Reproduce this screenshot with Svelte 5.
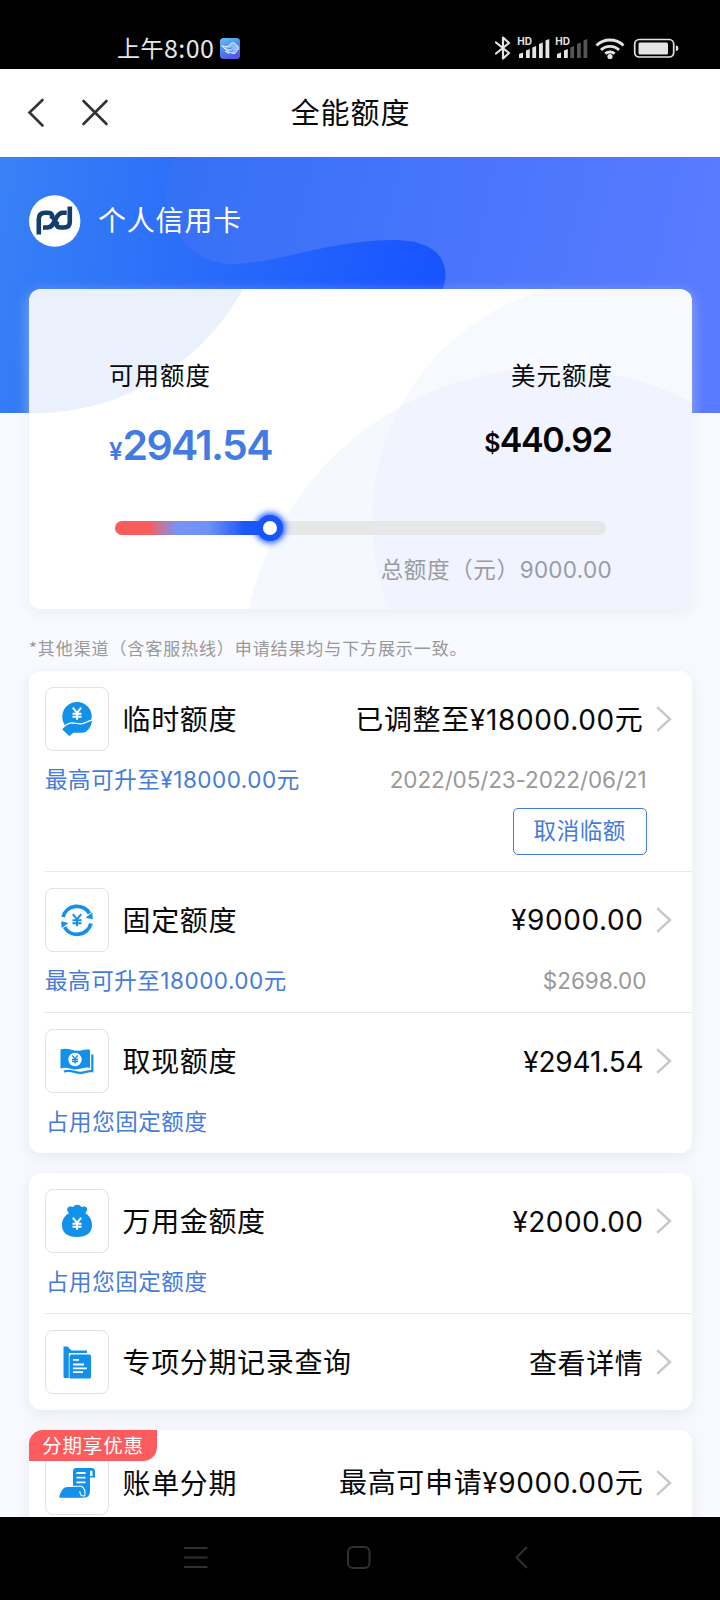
<script>
  const groups = [
    [
      { icon: 'hand', label: '临时额度', value: '已调整至¥18000.00元', fit: 0.65, note: '最高可升至¥18000.00元', side: '2022/05/23-2022/06/21', sideFit: -0.12, action: '取消临额' },
      { icon: 'cycle', label: '固定额度', value: '¥9000.00', fit: 0.6, note: '最高可升至18000.00元', side: '$2698.00', sideFit: 0 },
      { icon: 'cash', label: '取现额度', value: '¥2941.54', fit: -0.15, note: '占用您固定额度', inset: true }
    ],
    [
      { icon: 'bag', label: '万用金额度', value: '¥2000.00', fit: 0.45, note: '占用您固定额度', inset: true },
      { icon: 'files', label: '专项分期记录查询', value: '查看详情', fit: 0 }
    ],
    [{ icon: 'bill', label: '账单分期', value: '最高可申请¥9000.00元', fit: 0.6, tag: '分期享优惠' }]
  ];
  const used = 31.5;
  const parts = (s) => s.match(/[\x20-\xff]+|[^\x20-\xff]+/g) ?? [];
  const isNum = (s) => s.charCodeAt(0) < 256;
</script>

{#snippet mixed(text, fit)}{#each parts(text) as p}{#if isNum(p)}<span class="num" style="letter-spacing:{fit}px">{p}</span>{:else}<span>{p}</span>{/if}{/each}{/snippet}

{#snippet yen(x, y, s, color)}
  <path transform="translate({x} {y}) scale({s})" d="M-4 -5.5 0 -.5 4-5.5M0-.5V6M-4.3 .2H4.3M-4.3 3H4.3" fill="none" stroke={color} stroke-width="1.9" />
{/snippet}

{#snippet icon(name)}
  <svg class="glyph" width="64" height="64" viewBox="0 0 64 64" fill="#1290ea">
    {#if name === 'hand'}
      <circle cx="32" cy="29.7" r="14.7" />
      <path d="M16.3 42.5C20 38 24 35.5 28 36c4 .4 6 1.500 10 .5 4-1 6-3.500 10-3.500-1 7-5 13-10 13.500H28.500l-4.200 3.500z" stroke="#fff" stroke-width="1.300" />
      {@render yen(32, 26.5, 1.05, '#fff')}
    {:else if name === 'cycle'}
      <path d="M18 29A14.500 14.500 0 0 1 44.500 25.500M46 35.600A14.500 14.500 0 0 1 19.500 39.100" fill="none" stroke="#1290ea" stroke-width="3.800" />
      <path d="M47.300 24.500 47.800 31.300 40.500 29.700zM16.700 40.100 16.200 33.300 23.500 34.900z" />
      {@render yen(32, 32, 1.05, '#1290ea')}
    {:else if name === 'cash'}
      <path d="M15.500 20.500c8-2.500 13 2.500 20.500 1 4-.9 6.500-1.300 9-.7V39c-6-1.500-10 2-15.500 1.500-5-.5-8-3-14-1z" />
      <path d="M19 42.500c8-2.500 12 2.500 18.500 1.200 4-.8 6-2.200 9.800-1.500V25.500" fill="none" stroke="#1290ea" stroke-width="2.200" />
      <circle cx="30" cy="30.500" r="6.700" fill="#fff" />
      {@render yen(30, 30.300, .72, '#1290ea')}
    {:else if name === 'bag'}
      <path d="M24 24c-2.500-1.800-2.800-6.500 1.500-6.500 1.500 0 2 .3 2.800.5 1.500-3 6.500-3 8 0 .8-.3 1.500-.5 2.700-.5 4 0 4 4.500 1.200 6.500C45 27 47 31.500 47 36c0 8-5.500 12-15 12s-15-4-15-12c0-4.500 2-9 7-12z" />
      {@render yen(32, 34.500, 1.05, '#fff')}
    {:else if name === 'files'}
      <path d="M18.500 16.500h4l4 4h15.500v2.500H23.800V48H20a1.500 1.500 0 0 1-1.500-1.500z" />
      <path d="M26 24.500h18.500a1.500 1.500 0 0 1 1.500 1.500v21a1.500 1.500 0 0 1-1.500 1.500H24.500V26z" />
      <path d="M28 29.800h6M28 34.500h11M28 38.300h14M28 42.200h10" stroke="#fff" stroke-width="1.800" />
    {:else}
      <path d="M28 36V20.500c0-2 1-3.500 3-3.500h15.500c2.500 0 3.500 1.500 3.500 4v5.500h-5V39.500c0 5-2 7.200-6.500 7.200H15.300c-1 0-1.300-1-.8-2 2-5.500 4-8.700 8-8.700z" />
      <path d="M24 35.300h12.500c3.500 2 4 5.500 3.300 9.500-3.300 1-4.800-1.500-5-4.500" fill="none" stroke="#fff" stroke-width="1.100" />
      <path d="M31.500 22h9M31.500 26.700h9M31.500 31.300h9" stroke="#fff" stroke-width="1.800" />
      <path d="M45 25v-4c0-2 2.500-2 2.500 0v4z" fill="#fff" />
    {/if}
  </svg>
{/snippet}

<div class="screen">
  <header class="status">
    <div class="clock">
      <span>上午</span><span class="time">8:00</span>
      <svg width="20" height="21" viewBox="0 0 20 21">
        <defs><linearGradient id="launcher" x1="0" y1="0" x2=".4" y2="1"><stop stop-color="#67c4f4" /><stop offset=".5" stop-color="#4a90ee" /><stop offset="1" stop-color="#5659e8" /></linearGradient></defs>
        <rect width="20" height="21" rx="3.500" fill="url(#launcher)" />
        <path d="M2 7.500c4 2 6 1 8.500-1.500 2-2 5-1.500 5.500 1 3 .5 3.500 4.500.8 5.500-.5 3-4 4-6 2-2 1-4.500.3-5.500-1.500 1.500.4 3 0 4-.8C6.500 12.500 3.500 10.500 2 7.500z" fill="#8fbff8" stroke="#eaf5ff" stroke-width="1" />
        <path d="M7 10c2 1.200 4 .5 5.500-1M10 13.500c1 .5 2.500 0 3-1.500" fill="none" stroke="#4a7ee8" stroke-width="1" />
      </svg>
    </div>
    <svg class="signals" width="186" height="26" viewBox="0 0 186 26" fill="#e4e4e4">
      <path d="M2 7.500 15 18 9 23.500V2.500L15 8 2 18.500" fill="none" stroke="#e4e4e4" stroke-width="2.200" stroke-linejoin="round" stroke-linecap="round" />
      <g class="hd"><text x="23.300" y="10.300">HD</text><text x="61.300" y="10.300">HD</text></g>
      <path d="M25 23v-4l4-1.500V23zM32 23v-7.500l3.800-1.500v9zM38.300 23V12.500l3.800-1.500v12zM45 23V9l3.800-1.500V23zM51.500 23V5.500L55.300 4v19z" />
      <path d="M63 23v-4l4-1.500V23zM70 23v-7.500l3.800-1.500v9z" />
      <path d="M76.300 23V12.500l3.800-1.500v12zM83 23V9l3.800-1.500V23zM89.500 23V5.500L93.300 4v19z" fill="#555" />
      <g fill="none" stroke="#e4e4e4" stroke-width="2.900"><path d="M102.500 10.500a19.500 19.500 0 0 1 27 0M107 15a13 13 0 0 1 18 0M111.300 18.800a7 7 0 0 1 9.400 0" /></g>
      <circle cx="116" cy="21.500" r="2.600" />
      <rect x="140.700" y="4.500" width="39" height="17.500" rx="4.500" fill="none" stroke="#e4e4e4" stroke-width="1.700" />
      <rect x="144.500" y="7.500" width="29.500" height="12" rx="1.500" />
      <path d="M181.800 10.500c2 0 2.500 1 2.500 2.700s-.5 2.800-2.500 2.800z" />
    </svg>
  </header>

  <nav class="bar">
    <svg width="90" height="32" viewBox="0 0 90 32" fill="none" stroke="#333" stroke-width="2.600" stroke-linecap="round">
      <path d="M16.500 3 3.500 15.500 16.500 28.500M57.500 4 80.500 27M80.500 4 57.500 27" />
    </svg>
    <h1>全能额度</h1>
  </nav>

  <main>
    <section class="hero">
      <svg class="wave" width="720" height="256" viewBox="0 0 720 256">
        <defs>
          <linearGradient id="base" x1="0" y1="0" x2="450" y2="90" gradientUnits="userSpaceOnUse"><stop stop-color="#3882f5" /><stop offset="1" stop-color="#1853ff" /></linearGradient>
          <linearGradient id="blob" x1="160" y1="0" x2="720" y2="120" gradientUnits="userSpaceOnUse"><stop stop-color="#3470f5" /><stop offset=".35" stop-color="#4173fa" /><stop offset="1" stop-color="#5a7bff" /></linearGradient>
        </defs>
        <rect width="720" height="256" fill="url(#base)" />
        <path d="M177 0C164 12 163 34 169 54C177 90 205 107 231 107C276 107 330 83 392 83C432 83 445 99 445.500 117C446 127 441 136 436 146V256H720V0Z" fill="url(#blob)" />
      </svg>
      <div class="holder">
        <svg width="52" height="52" viewBox="0 0 52 52">
          <circle cx="25.700" cy="26" r="25.700" fill="#fff" />
          <g fill="none" stroke="#123e6d" stroke-width="4.600">
            <path d="M9.800 39.500V24q0-6.200 6.500-6.200h2.500c4.500 0 5.500 3.500 3.200 6.200" />
            <path d="M14 32.500h4.500c4.500 0 5.800-3.500 7.500-7.300s3.700-7.400 7.700-7.400h4" />
            <path d="M40.800 11.500V27q0 5.500-6 5.500h-3c-4.500 0-5.300-3.500-3-6.200" />
          </g>
        </svg>
        <span>个人信用卡</span>
      </div>
      <div class="quota">
        <svg class="rings" width="663" height="320" viewBox="0 0 663 320">
          <circle cx="3" cy="-116.500" r="241" fill="#ebf0fd" />
          <circle cx="583" cy="231" r="240" fill="#f6f9fe" />
          <circle cx="521" cy="388" r="309" fill="#e9effe" fill-opacity=".42" />
        </svg>
        <div class="cols">
          <div><p>可用额度</p><strong class="avail"><small>¥</small>2941.54</strong></div>
          <div class="right"><p>美元额度</p><strong class="usd"><small>$</small>440.92</strong></div>
        </div>
        <div class="track"><div class="fill" style="width:{used}%"><i></i></div></div>
        <div class="total">{@render mixed('总额度（元）9000.00', 0.3)}</div>
      </div>
    </section>

    <p class="hint">*其他渠道（含客服热线）申请结果均与下方展示一致。</p>

    <div class="groups">
      {#each groups as rows}
        <section class="group">
          {#each rows as r}
            {#if r.tag}<span class="tag">{r.tag}</span>{/if}
            <article class:tagged={r.tag}>
              <div class="row">
                <div class="box">{@render icon(r.icon)}</div>
                <span class="label">{r.label}</span>
                <span class="value">{@render mixed(r.value, r.fit)}</span>
                <svg width="16" height="26" viewBox="0 0 16 26" fill="none" stroke="#c8c8c8" stroke-width="2.400"><path d="M1.200 1.200 14 13 1.200 24.800" /></svg>
              </div>
              {#if r.note}
                <div class="sub">
                  <span class="link" class:inset={r.inset}>{@render mixed(r.note, 0.5)}</span>
                  {#if r.side}<span class="side">{@render mixed(r.side, r.sideFit)}</span>{/if}
                </div>
              {/if}
              {#if r.action}<button>{r.action}</button>{/if}
            </article>
          {/each}
        </section>
      {/each}
    </div>
  </main>

  <footer>
    <svg width="720" height="83" viewBox="0 0 720 83" fill="none" stroke="#303030" stroke-width="2">
      <path d="M184 31H207.500M184 40.500H207.500M184 50H207.500" />
      <rect x="348" y="30" width="21.500" height="21" rx="5" />
      <path d="M527 30 516.500 40.500 527 51" />
    </svg>
  </footer>
</div>

<style>
  :global(body) { margin: 0; background: #000; }
  .screen {
    width: 720px; height: 1600px; overflow: hidden; display: flex; flex-direction: column;
    background: #000; color: #080808;
    font-family: 'Noto Sans CJK SC', sans-serif; font-size: 28px; letter-spacing: .65px;
  }
  svg { display: block; flex: none; }
  p, h1 { margin: 0; font-weight: 400; }
  .num { font-family: Inter, sans-serif; font-weight: 400; }

  .status { height: 68.500px; flex: none; display: flex; justify-content: space-between; align-items: flex-start; padding: 0 40.500px 0 117px; box-sizing: border-box; }
  .clock { display: flex; align-items: center; height: 40px; margin-top: 28px; color: #e6e6e6; font-size: 23px; font-weight: 400; letter-spacing: .5px; }
  .clock span { line-height: 36px; margin-bottom: 2px; }
  .clock .time { font-size: 25px; letter-spacing: .4px; margin-right: 6px; }
  .signals { margin-top: 35px; }
  .hd text { font: 700 10px Inter, sans-serif; letter-spacing: 0; }

  .bar { height: 88.500px; flex: none; background: #fff; display: grid; grid-template-columns: 26px 90px 1fr; align-items: center; }
  .bar svg { grid-column: 2; grid-row: 1; }
  .bar h1 { grid-column: 1 / -1; grid-row: 1; justify-self: center; font-size: 29px; letter-spacing: .9px; line-height: 40px; margin: 0 19px 4px 0; }

  main { flex: 1; min-height: 0; overflow: hidden; background: #f8faff; }
  .hero { position: relative; padding: 0 28px 0 29px; }
  .wave { position: absolute; left: 0; top: 0; }
  .holder { position: relative; display: flex; align-items: center; gap: 17px; height: 128px; color: #fff; font-size: 28px; letter-spacing: .8px; }
  .holder span { line-height: 40px; margin-bottom: 4px; }
  .quota {
    position: relative; height: 320px; margin-top: 4px; border-radius: 12px; background: #fff;
    box-sizing: border-box; padding: 66px 80px 0; box-shadow: 0 4px 14px rgba(225, 227, 232, .5);
  }
  .rings { position: absolute; left: 0; top: 0; border-radius: 12px; }
  .cols { position: relative; display: flex; justify-content: space-between; height: 166px; }
  .cols p { font-size: 24.500px; letter-spacing: 1px; line-height: 40px; }
  .cols strong { display: block; font-family: Inter, sans-serif; font-weight: 600; line-height: 50px; }
  .right { text-align: right; }
  .right p { margin-right: -1px; }
  .avail { color: #427be3; font-size: 41px; margin-top: 25px; letter-spacing: -1.650px; }
  .avail small { font-size: 24px; letter-spacing: 0; }
  .usd { color: #050505; font-size: 34px; margin-top: 20px; letter-spacing: -1.400px; margin-right: 0; padding-right: .5px; }
  .usd small { font-size: 25px; letter-spacing: -.8px; }
  .track { position: relative; height: 14px; margin: 0 6px 0 6px; border-radius: 7px; background: #e7e7e8; }
  .fill { height: 100%; border-radius: 7px; display: flex; justify-content: flex-end; align-items: center; background: linear-gradient(90deg, #f85d5b 22%, #7794f4 40%, #7092f5 60%, #1b57f8 84%); }
  .fill i { width: 14px; height: 14px; margin-right: -7px; border-radius: 50%; background: #fff; box-shadow: 0 0 0 6px #1755fb, 0 0 6px 8px #1755fb; flex: none; }
  .total { position: relative; margin-top: 17px; text-align: right; color: #999ca3; font-size: 22.500px; letter-spacing: .65px; line-height: 32px; }

  .hint { font-size: 17px; letter-spacing: .9px; color: #999; line-height: 24px; padding: 27px 0 0 29px; white-space: nowrap; }
  .groups { display: flex; flex-direction: column; gap: 20px; padding: 11px 28px 0 29px; }
  .group { position: relative; background: #fff; border-radius: 12px; box-shadow: 0 4px 14px rgba(215, 218, 224, .5); }
  article { margin-left: 16px; padding-top: 16px; padding-bottom: 16px; }
  article + article { border-top: 1px solid #e9e9ea; padding-top: 16.300px; }
  article.tagged { padding-top: 20.500px; }
  .row { display: flex; align-items: center; height: 64px; padding-right: 20px; }
  .box { width: 64px; height: 64px; box-sizing: border-box; border: 1px solid #e2e2e5; border-radius: 8px; }
  .glyph { margin: -1px; }
  .label { margin-left: 13.500px; line-height: 40px; margin-bottom: 2px; }
  .value { margin-left: auto; margin-right: 12.500px; line-height: 40px; margin-bottom: 1px; white-space: nowrap; }
  .sub { display: flex; justify-content: space-between; height: 32px; padding: 11px 45.500px 1px 0; font-size: 22.500px; letter-spacing: .57px; line-height: 32px; }
  .link { color: #447bdc; }
  .inset { margin-left: 1px; }
  .side { color: #999; }
  button {
    display: block; margin: 12.500px 45px 0 auto; width: 134.500px; height: 47px; padding: 0; border: 1.500px solid #447bdc; border-radius: 5px;
    background: #fff; color: #447bdc; font: inherit; font-size: 22.500px; letter-spacing: .57px; line-height: 39px; padding-bottom: 3px;
  }
  .tag {
    position: absolute; z-index: 1; left: 0; top: 0; width: 128px; height: 31px; border-radius: 14px 0 14px 0; background: #fc5c5d;
    color: #fff; font-size: 19.500px; letter-spacing: .8px; line-height: 30px; text-align: center;
  }
  footer { height: 83px; flex: none; background: #000; }
</style>
